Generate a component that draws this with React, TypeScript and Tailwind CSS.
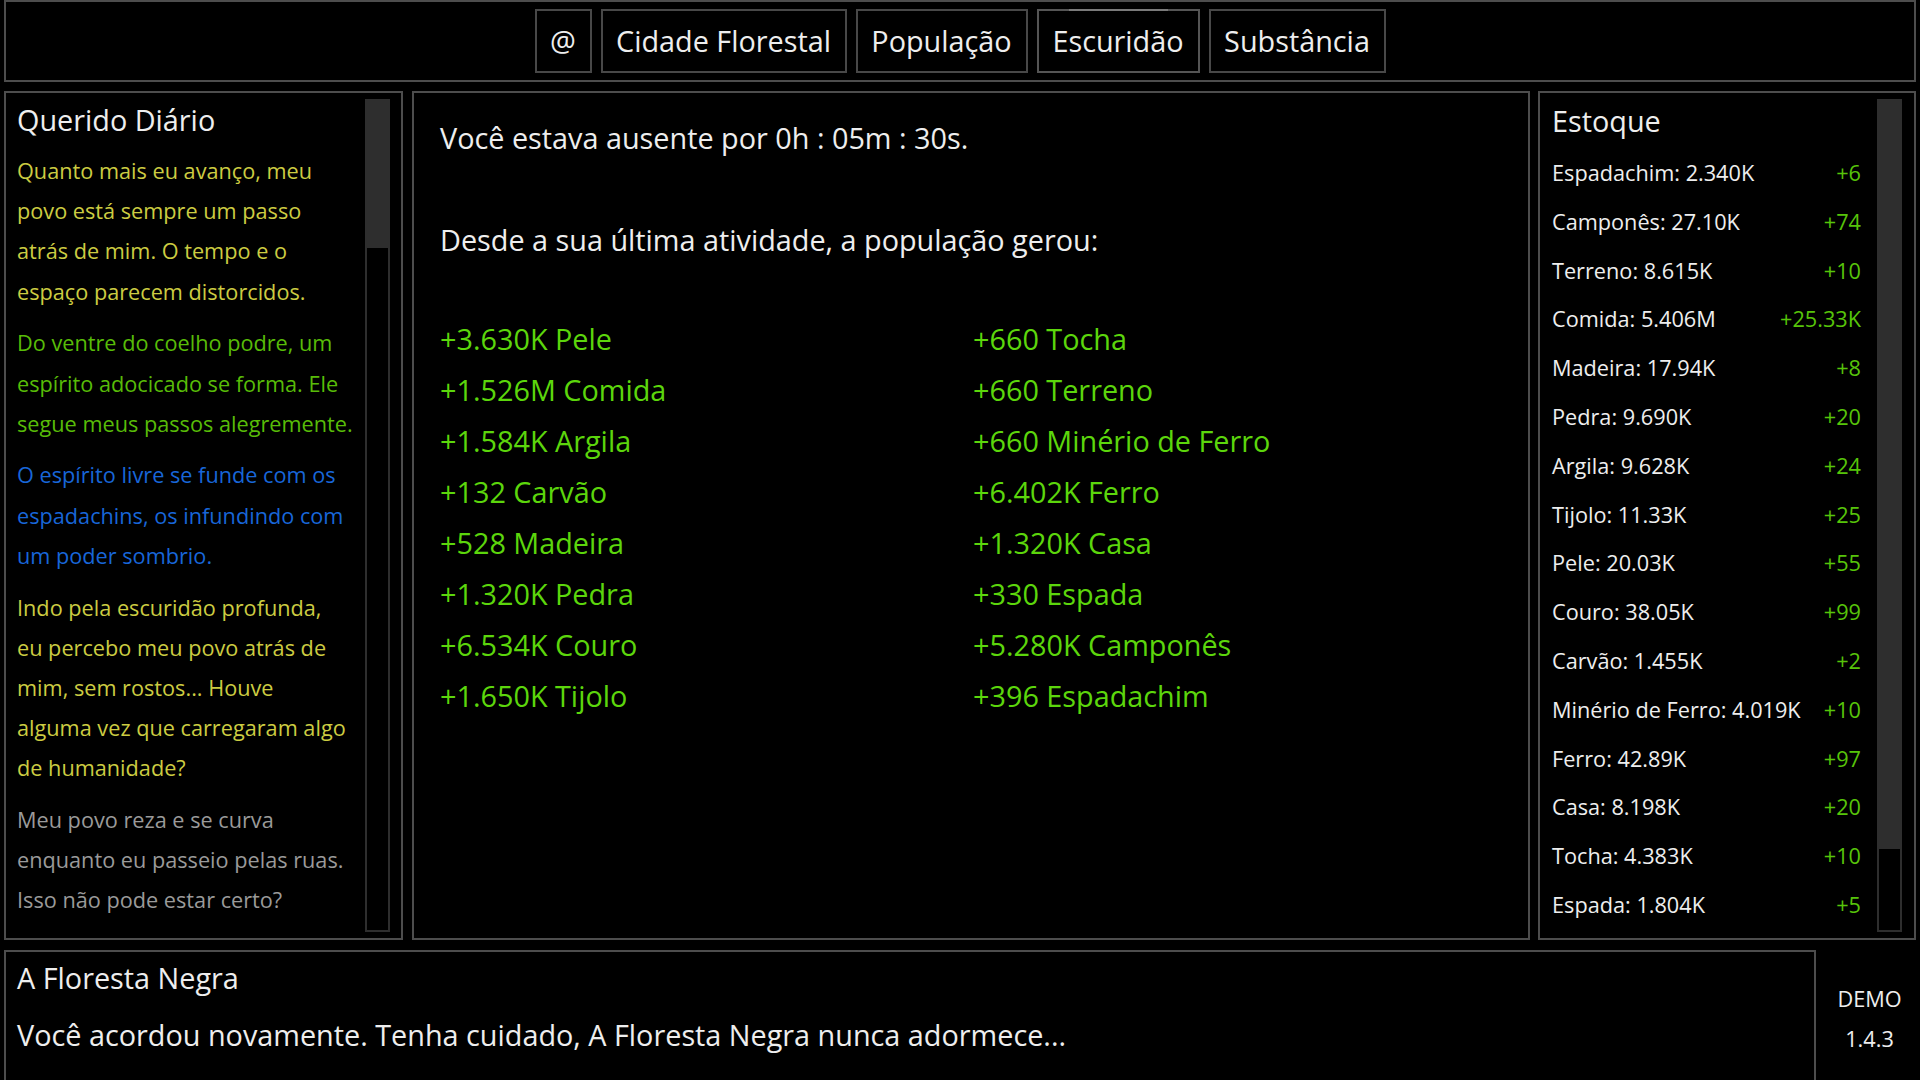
const tabs = [
  { label: "@", w: "w-[57px]" },
  { label: "Cidade Florestal", w: "w-[246px]" },
  { label: "População", w: "w-[172px]" },
  { label: "Escuridão", w: "w-[163px]", active: true },
  { label: "Substância", w: "w-[177px]" },
];

const journal = [
  {
    color: "text-[#cccc42]",
    lines: ["Quanto mais eu avanço, meu", "povo está sempre um passo", "atrás de mim. O tempo e o", "espaço parecem distorcidos."],
  },
  {
    color: "text-[#58bc08]",
    lines: ["Do ventre do coelho podre, um", "espírito adocicado se forma. Ele", "segue meus passos alegremente."],
  },
  {
    color: "text-[#1866d8]",
    lines: ["O espírito livre se funde com os", "espadachins, os infundindo com", "um poder sombrio."],
  },
  {
    color: "text-[#cccc42]",
    lines: [
      "Indo pela escuridão profunda,",
      "eu percebo meu povo atrás de",
      "mim, sem rostos... Houve",
      "alguma vez que carregaram algo",
      "de humanidade?",
    ],
  },
  {
    color: "text-[#9a9a9a]",
    lines: ["Meu povo reza e se curva", "enquanto eu passeio pelas ruas.", "Isso não pode estar certo?"],
  },
];

const gainedLeft = [
  "+3.630K Pele",
  "+1.526M Comida",
  "+1.584K Argila",
  "+132 Carvão",
  "+528 Madeira",
  "+1.320K Pedra",
  "+6.534K Couro",
  "+1.650K Tijolo",
];

const gainedRight = [
  "+660 Tocha",
  "+660 Terreno",
  "+660 Minério de Ferro",
  "+6.402K Ferro",
  "+1.320K Casa",
  "+330 Espada",
  "+5.280K Camponês",
  "+396 Espadachim",
];

const stock = [
  ["Espadachim", "2.340K", "+6"],
  ["Camponês", "27.10K", "+74"],
  ["Terreno", "8.615K", "+10"],
  ["Comida", "5.406M", "+25.33K"],
  ["Madeira", "17.94K", "+8"],
  ["Pedra", "9.690K", "+20"],
  ["Argila", "9.628K", "+24"],
  ["Tijolo", "11.33K", "+25"],
  ["Pele", "20.03K", "+55"],
  ["Couro", "38.05K", "+99"],
  ["Carvão", "1.455K", "+2"],
  ["Minério de Ferro", "4.019K", "+10"],
  ["Ferro", "42.89K", "+97"],
  ["Casa", "8.198K", "+20"],
  ["Tocha", "4.383K", "+10"],
  ["Espada", "1.804K", "+5"],
];

function Scrollbar({ thumb }: { thumb: string }) {
  return (
    <div className="flex flex-col w-[25px] shrink-0">
      <div className={`bg-[#2e2e2e] ${thumb}`} />
      <div className="flex-1 border-2 border-[#2e2e2e]" />
    </div>
  );
}

export default function App() {
  return (
    <div className="w-[1920px] h-[1080px] overflow-hidden bg-black px-[4px] flex flex-col text-[#eeeeee] [font-family:'Open_Sans',sans-serif]">
      {/* nav */}
      <div className="h-[82px] shrink-0 border-2 border-[#4d4d4d] flex items-center justify-center gap-[9px]">
        {tabs.map((t) => (
          <div
            key={t.label}
            className={`relative h-[64px] ${t.w} border-2 flex items-center justify-center text-[28.8px] leading-none ${
              t.active ? "border-[#555555]" : "border-[#484848]"
            }`}
          >
            {t.active && <div className="absolute -top-[2px] left-[30px] right-[30px] h-[2px] bg-[#7a7a7a]" />}
            <span>{t.label}</span>
          </div>
        ))}
      </div>

      <div className="h-[858px] shrink-0 pt-[9px] flex gap-[8px]">
        {/* journal */}
        <div className="w-[399px] shrink-0 border-2 border-[#4d4d4d] flex pr-[11px] py-[6px] mr-[1px]">
          <div className="flex-1 pl-[11px] pt-[1px] overflow-hidden">
            <div className="text-[28.8px] leading-[40px]">Querido Diário</div>
            <div className="mt-[11px] flex flex-col gap-[11.5px] text-[21.7px] leading-[40.2px]">
              {journal.map((p, i) => (
                <div key={i} className={p.color}>
                  {p.lines.map((l) => (
                    <div key={l} className="whitespace-nowrap">
                      {l}
                    </div>
                  ))}
                </div>
              ))}
            </div>
          </div>
          <Scrollbar thumb="h-[147px]" />
        </div>

        {/* offline report */}
        <div className="w-[1118px] shrink-0 border-2 border-[#4d4d4d] pl-[26px] pt-[25px]">
          <div className="text-[28.8px] leading-[40px]">Você estava ausente por 0h : 05m : 30s.</div>
          <div className="mt-[62px] text-[28.8px] leading-[40px]">Desde a sua última atividade, a população gerou:</div>
          <div className="mt-[53px] flex text-[28.8px] leading-[51px] text-[#5cd60c]">
            <div className="w-[533px] flex flex-col">
              {gainedLeft.map((g) => (
                <div key={g}>{g}</div>
              ))}
            </div>
            <div className="flex flex-col">
              {gainedRight.map((g) => (
                <div key={g}>{g}</div>
              ))}
            </div>
          </div>
        </div>

        {/* stock */}
        <div className="flex-1 border-2 border-[#4d4d4d] flex pr-[12px] py-[6px]">
          <div className="flex-1 pl-[12px] pr-[16px] pt-[2px]">
            <div className="text-[28.8px] leading-[40px]">Estoque</div>
            <div className="mt-[8px] flex flex-col text-[21.7px] leading-[48.8px]">
              {stock.map(([name, val, delta]) => (
                <div key={name} className="flex justify-between whitespace-nowrap">
                  <span>
                    {name}: {val}
                  </span>
                  <span className="text-[#57c40a]">{delta}</span>
                </div>
              ))}
            </div>
          </div>
          <Scrollbar thumb="h-[748px]" />
        </div>
      </div>

      {/* log */}
      <div className="flex-1 flex pt-[10px]">
        <div className="w-[1812px] h-[150px] shrink-0 border-2 border-[#4d4d4d] pl-[11px] pt-[6px]">
          <div className="text-[28.8px] leading-[40px]">A Floresta Negra</div>
          <div className="mt-[17px] text-[28.8px] leading-[40px]">
            Você acordou novamente. Tenha cuidado, A Floresta Negra nunca adormece...
          </div>
        </div>
        <div className="flex-1 flex flex-col items-center pl-[7px] pt-[29px] text-[21.7px] leading-[40px]">
          <div>DEMO</div>
          <div>1.4.3</div>
        </div>
      </div>
    </div>
  );
}
